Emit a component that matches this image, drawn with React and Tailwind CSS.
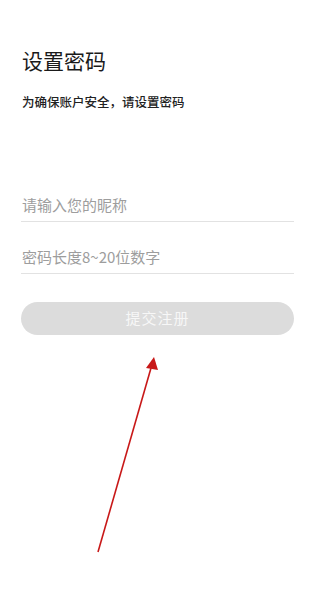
import { useState } from 'react';

export default function App() {
  const [nick, setNick] = useState('');
  const [pwd, setPwd] = useState('');

  return (
    <div className="relative w-[320px] h-[607px] bg-white overflow-hidden font-['Noto_Sans_CJK_SC','Noto_Sans',sans-serif]">
      <div className="pl-[21px] pr-[26px] pt-[48px]">
        {/* Heading */}
        <h1 className="text-[21px] leading-[24px] text-[#1a1a1a] pl-px">设置密码</h1>
        <p className="mt-[22px] text-[12.5px] leading-[16px] text-[#222] font-medium pl-px">为确保账户安全，请设置密码</p>

        {/* Fields */}
        <div className="mt-[78px]">
          <input value={nick} onChange={e => setNick(e.target.value)}
            placeholder="请输入您的昵称"
            className="block w-full h-[34px] text-[15px] outline-none border-b border-[#e2e2e2] placeholder:text-[#9d9d9d] pl-px" />
          <input value={pwd} onChange={e => setPwd(e.target.value)}
            type="password"
            placeholder="密码长度8~20位数字"
            className="block w-full h-[34px] mt-[18px] text-[15px] outline-none border-b border-[#e2e2e2] placeholder:text-[#9d9d9d] pl-px" />
        </div>

        <button className="mt-[28px] w-full h-[33px] rounded-full bg-[#dcdcdc] text-[15px] text-[#f7f7f7] tracking-[1px]">
          提交注册
        </button>
      </div>

      {/* Annotation arrow */}
      <svg className="absolute inset-0 pointer-events-none" width="320" height="607" viewBox="0 0 320 607">
        <line x1="98" y1="552" x2="151" y2="368" stroke="#c81818" strokeWidth="1.6" />
        <polygon points="154,357 146,368 158,370" fill="#c81818" />
      </svg>
    </div>
  );
}
